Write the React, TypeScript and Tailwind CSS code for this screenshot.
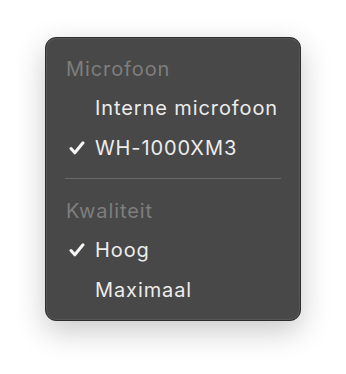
export default function App() {
  const font = { fontFamily: "Inter, 'Noto Sans', sans-serif" };
  return (
    <div className="w-[346px] h-[374px] bg-white relative" style={font}>
      <div className="absolute left-[45px] top-[37px] w-[256px] h-[284px] rounded-[11px] border border-[#2c2c2c] bg-[#484848] shadow-[0_10px_30px_rgba(0,0,0,0.22),inset_0_0_0_1px_rgba(255,255,255,0.09)] pt-[12px] pb-[10px]">
        <MenuHeader label="Microfoon" />
        <MenuItem label="Interne microfoon" />
        <MenuItem label="WH-1000XM3" checked />
        <div className="mt-[10px] mb-[13px] mx-[19px] h-px bg-[#696969]" />
        <MenuHeader label="Kwaliteit" />
        <MenuItem label="Hoog" checked />
        <MenuItem label="Maximaal" />
      </div>
    </div>
  );
}

function MenuHeader({ label }: { label: string }) {
  return (
    <div className="h-[38px] flex items-center pl-[20px] text-[20px] tracking-[0.9px] text-[#7e7e7e]">
      {label}
    </div>
  );
}

function MenuItem({ label, checked }: { label: string; checked?: boolean }) {
  return (
    <div className="h-[40px] flex items-center text-[20px] tracking-[0.9px] text-[#ececec]">
      <div className="w-[49px] flex justify-end pr-[10px]">
        {checked && (
          <svg width="16" height="14" viewBox="0 0 16 14">
            <path d="M2 7.6 L5.8 11.8 L14 1.8" fill="none" stroke="#f6f6f6" strokeWidth="3" strokeLinecap="round" strokeLinejoin="round" />
          </svg>
        )}
      </div>
      <span>{label}</span>
    </div>
  );
}
